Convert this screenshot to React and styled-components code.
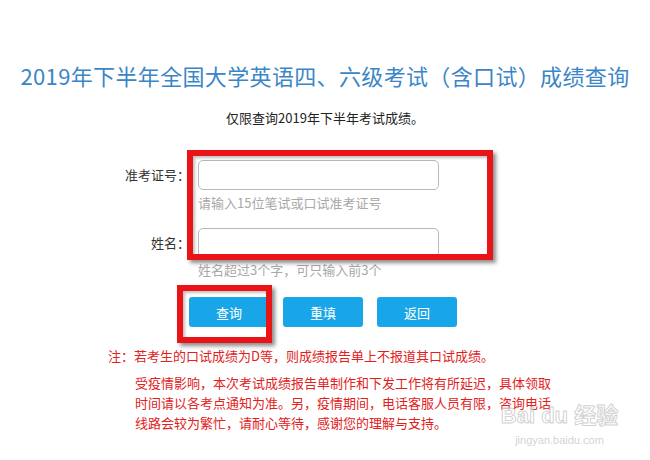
import React from "react";
import styled, { createGlobalStyle } from "styled-components";

const Global = createGlobalStyle`
  html, body { margin: 0; padding: 0; background: #fff; }
  body { font-family: "Noto Sans CJK SC", "Noto Sans", sans-serif; }
`;

const Page = styled.div`
  position: relative;
  width: 650px;
  height: 460px;
  overflow: hidden;
  padding-top: 60px;
  box-sizing: border-box;
  background: #fff;
`;

const Title = styled.h1`
  margin: 0;
  font-size: 22px;
  line-height: 30px;
  font-weight: 400;
  color: #3a86c6;
  text-align: center;
  letter-spacing: 0.35px;
`;

const Subtitle = styled.p`
  margin: 18px 0 0;
  font-size: 13px;
  line-height: 20px;
  color: #222;
  text-align: center;
`;

const Form = styled.div`
  margin-top: 32px;
  display: grid;
  grid-template-columns: 190px 241px;
  column-gap: 8px;
  align-items: center;
`;

const Label = styled.label`
  font-size: 13px;
  color: #333;
  text-align: right;
  line-height: 30px;
  margin-top: ${(p) => p.$mt || 0}px;
`;

const Input = styled.div`
  height: 30px;
  box-sizing: border-box;
  border: 1px solid #b8b8b8;
  border-radius: 5px;
  background: #fff;
  margin-top: ${(p) => p.$mt || 0}px;
`;

const Hint = styled.div`
  grid-column: 2;
  font-size: 13px;
  line-height: 20px;
  color: #a8a8a8;
  margin-top: ${(p) => p.$mt}px;
`;

const Buttons = styled.div`
  margin: 17px 0 0 189px;
  display: flex;
  gap: 14px;
`;

const Button = styled.button`
  width: 80px;
  height: 30px;
  border: 0;
  border-radius: 3px;
  background: #19a6e8;
  color: #fff;
  font-family: inherit;
  font-size: 13px;
  padding: 0;
`;

const Note = styled.p`
  margin: 19px 0 0 108px;
  font-size: 13px;
  line-height: 20px;
  color: #e2211c;
`;

const Notice = styled.p`
  margin: 7px 0 0 135px;
  width: 420px;
  font-size: 13px;
  line-height: 20px;
  color: #e2211c;
`;

const Highlight = styled.div`
  position: absolute;
  left: ${(p) => p.$x}px;
  top: ${(p) => p.$y}px;
  width: ${(p) => p.$w}px;
  height: ${(p) => p.$h}px;
  box-sizing: border-box;
  border: 6px solid #ea1418;
  box-shadow: 3px 3px 4px rgba(0, 0, 0, 0.45), inset 2px 2px 3px rgba(0, 0, 0, 0.25);
  pointer-events: none;
`;

const Watermark = styled.div`
  position: absolute;
  left: 502px;
  top: 402px;
  width: 115px;
  display: flex;
  flex-direction: column;
  align-items: center;
  font-family: "Liberation Sans", "Noto Sans CJK SC", sans-serif;
  pointer-events: none;
`;

const Brand = styled.div`
  font-size: 22px;
  line-height: 28px;
  font-weight: 700;
  white-space: nowrap;
  color: rgba(255, 255, 255, 0.55);
  -webkit-text-stroke: 1px rgba(195, 195, 195, 0.75);
`;

const Domain = styled.div`
  font-size: 11px;
  line-height: 14px;
  margin-top: 3px;
  white-space: nowrap;
  color: rgba(200, 200, 200, 0.8);
`;

export default function App() {
  return (
    <>
      <Global />
      <Page>
        <Title>2019年下半年全国大学英语四、六级考试（含口试）成绩查询</Title>
        <Subtitle>仅限查询2019年下半年考试成绩。</Subtitle>
        <Form>
          <Label>准考证号：</Label>
          <Input />
          <Hint $mt={3}>请输入15位笔试或口试准考证号</Hint>
          <Label $mt={15}>姓名：</Label>
          <Input $mt={15} />
          <Hint $mt={2}>姓名超过3个字，可只输入前3个</Hint>
        </Form>
        <Buttons>
          <Button>查询</Button>
          <Button>重填</Button>
          <Button>返回</Button>
        </Buttons>
        <Note>注：若考生的口试成绩为D等，则成绩报告单上不报道其口试成绩。</Note>
        <Notice>
          受疫情影响，本次考试成绩报告单制作和下发工作将有所延迟，具体领取时间请以各考点通知为准。另，疫情期间，电话客服人员有限，咨询电话线路会较为繁忙，请耐心等待，感谢您的理解与支持。
        </Notice>
        <Highlight $x={187} $y={150} $w={306} $h={110} />
        <Highlight $x={177} $y={285} $w={95} $h={58} />
        <Watermark>
          <Brand>Bai du 经验</Brand>
          <Domain>jingyan.baidu.com</Domain>
        </Watermark>
      </Page>
    </>
  );
}
